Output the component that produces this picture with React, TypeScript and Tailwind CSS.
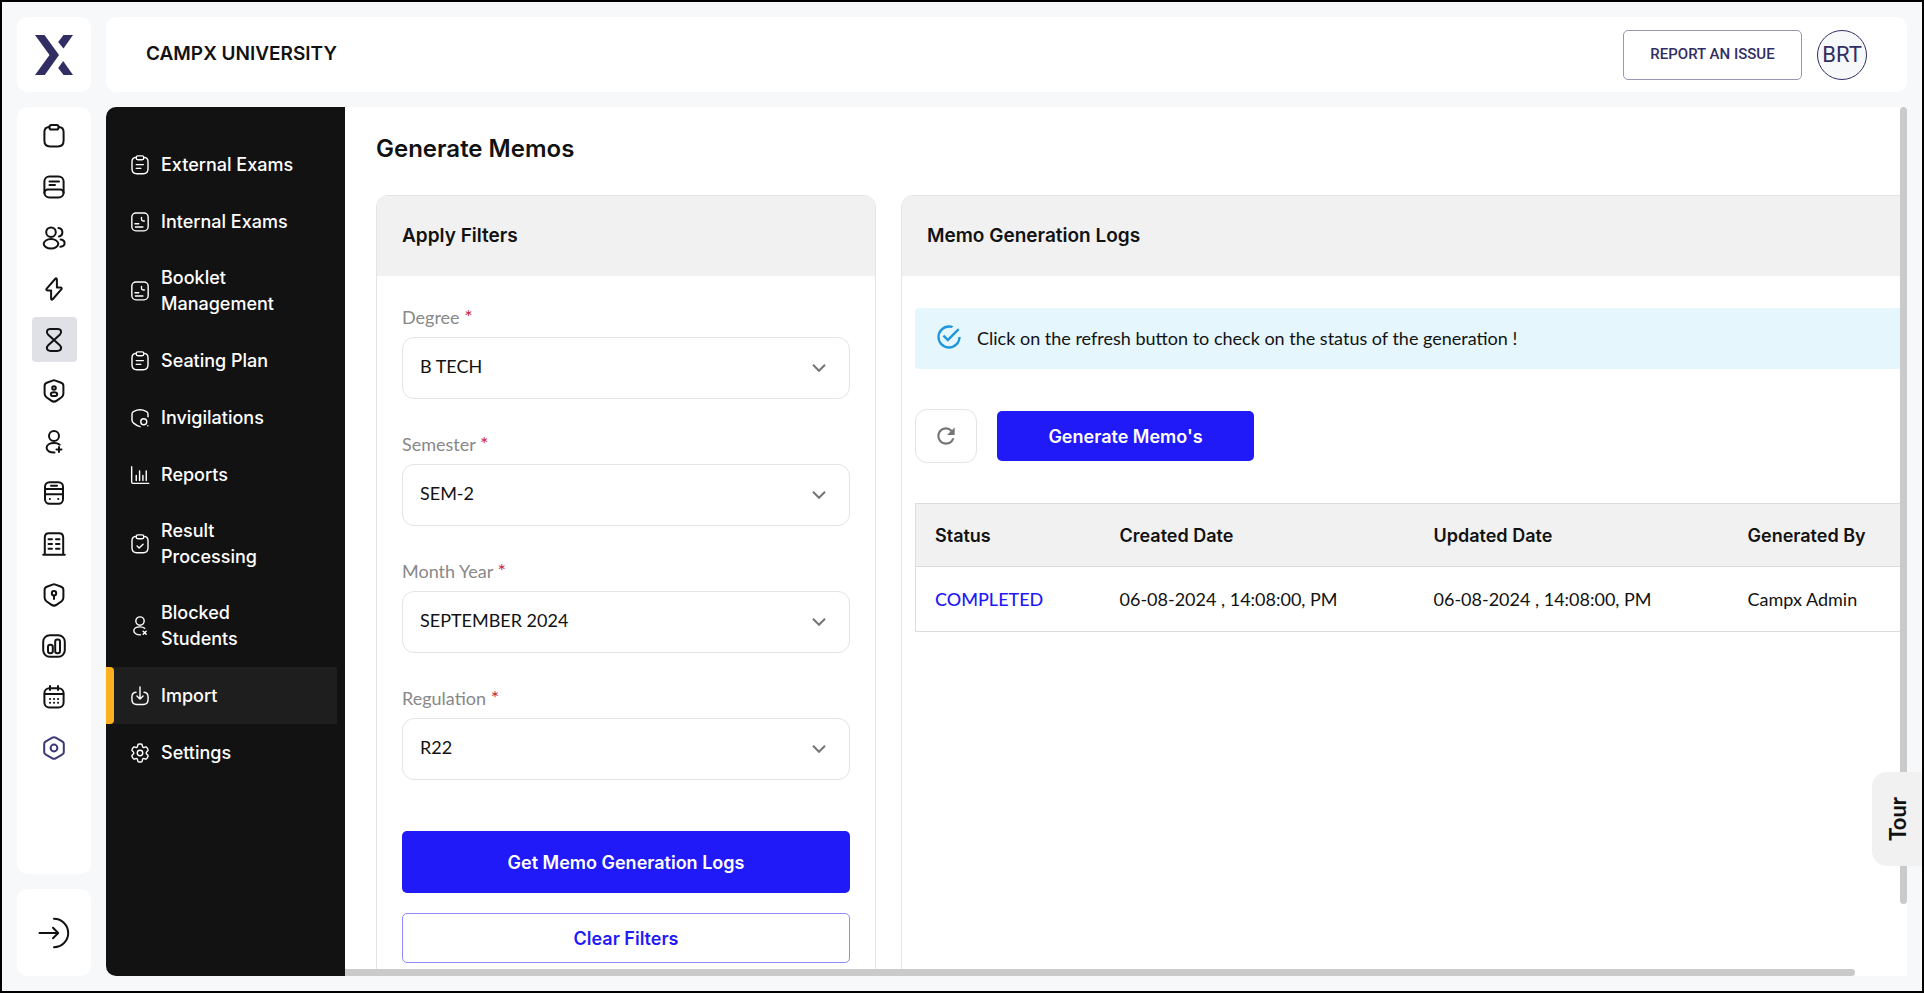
import { useState } from 'react';
import type { ReactNode } from 'react';
import { MdRefresh } from 'react-icons/md';

type IconProps = { children: ReactNode; className?: string };

const Icon = ({ children, className = 'size-6 stroke-2' }: IconProps) => (
  <svg
    viewBox="0 0 24 24"
    fill="none"
    stroke="currentColor"
    strokeWidth="1.7"
    strokeLinecap="round"
    strokeLinejoin="round"
    aria-hidden="true"
    className={`shrink-0 ${className}`}
  >
    {children}
  </svg>
);

const shieldPath =
  'M10.49 1.6L4.8 3.8c-1.2.45-2.2 1.9-2.2 3.2v7.6c0 1.3.8 2.9 1.8 3.6l4.8 3.4c1.5 1.1 4.1 1.1 5.6 0l4.8-3.4c1-.7 1.8-2.3 1.8-3.6V7c0-1.3-1-2.75-2.2-3.2l-5.69-2.2c-.85-.31-2.21-.31-3.02 0z';

const clipboardBody = (
  <>
    <path d="M7.5 2.9C4 3 2.4 4.6 2.4 8v8.5c0 4 1.6 5.9 5.6 5.9h8c4 0 5.6-1.9 5.6-5.9V8c0-3.4-1.6-5-5.1-5.1" />
    <rect x="7.4" y="1" width="9.2" height="4.6" rx="2.1" />
  </>
);

const noteBody = (
  <>
    <rect x="2.2" y="1.2" width="19.6" height="21.4" rx="5" />
    <path d="M6 14h4.5M6.5 18h9M13.8 6.5v2.3c0 1.2.8 2 2 2h1.4" />
  </>
);

const railItems = [
  { label: 'Exams', icon: clipboardBody },
  {
    label: 'Courses',
    icon: (
      <>
        <rect x="2.4" y="1.4" width="19.2" height="21.2" rx="5" />
        <path d="M2.4 18c0-2 1.6-3.5 3.6-3.5h12c2 0 3.6 1.5 3.6 3.5M7.5 6.5H17M7.5 10H13" />
      </>
    ),
  },
  {
    label: 'People',
    icon: (
      <>
        <circle cx="9" cy="6.2" r="4.8" />
        <ellipse cx="9" cy="17.8" rx="7.3" ry="4.7" />
        <path d="M16.5 2a4.3 4.3 0 0 1 .4 8.5M18.6 13.6c2.5.4 4 1.7 4 3.6s-1.5 3.2-4.2 3.6" />
      </>
    ),
  },
  {
    label: 'Quick actions',
    icon: (
      <path d="M5.6 13.5h3.5v7.9c0 1.4.8 1.7 1.8.6l8.4-9.6c.8-1 .4-1.9-.9-1.9h-3.5V2.6c0-1.4-.8-1.7-1.8-.6L4.7 11.6c-.8 1-.4 1.9.9 1.9z" />
    ),
  },
  {
    label: 'Examinations',
    icon: (
      <path d="M15.6 1.1H8.4c-4 0-4.3 3.6-2.2 5.6l11.6 10.6c2.1 2 1.8 5.6-2.2 5.6H8.4c-4 0-4.3-3.6-2.2-5.6L17.8 6.7c2.1-2 1.8-5.6-2.2-5.6z" />
    ),
  },
  {
    label: 'Admissions',
    icon: (
      <>
        <path d={shieldPath} />
        <circle cx="12" cy="9" r="1.8" />
        <ellipse cx="12" cy="15.2" rx="3.2" ry="1.9" />
      </>
    ),
  },
  {
    label: 'Enrollment',
    icon: (
      <>
        <circle cx="12" cy="6" r="5" />
        <path d="M12.5 22.6c-4.7.1-7.9-1.9-7.9-4.8S7.8 13 12 13c2.7 0 4.5.7 5.7 1.7M17 16.9v5M14.5 19.4h5" />
      </>
    ),
  },
  {
    label: 'Transport',
    icon: (
      <>
        <rect x="3" y="1.2" width="18" height="21.6" rx="4.5" />
        <path d="M3 8h18M3 13.2h18M9 4.7h6M7.8 18h.1M16.2 18h.1" />
      </>
    ),
  },
  {
    label: 'Hostel',
    icon: (
      <path d="M2.8 22.4V5.5c0-2.7 1.4-4.2 4.2-4.2h10c2.8 0 4.2 1.5 4.2 4.2v16.9M1.2 22.7h21.6M6.5 7.3H10M6.5 12H10M6.5 16.7H10M14 7.3h3.5M14 12h3.5M14 16.7h3.5" />
    ),
  },
  {
    label: 'Security',
    icon: (
      <>
        <path d={shieldPath} />
        <circle cx="12" cy="10.2" r="2.2" />
        <path d="M12 12.4V16" />
      </>
    ),
  },
  {
    label: 'Statistics',
    icon: (
      <>
        <rect x="1.2" y="1.2" width="21.6" height="21.6" rx="6.5" />
        <rect x="6" y="10.8" width="4.8" height="8.4" rx="2.2" />
        <rect x="13.2" y="5.5" width="4.8" height="13.7" rx="2.2" />
      </>
    ),
  },
  {
    label: 'Calendar',
    icon: (
      <>
        <rect x="2.4" y="3.2" width="19.2" height="19.4" rx="5" />
        <path d="M8 1v4M16 1v4M2.8 9h18.4M8 14h.1M12 14h.1M16 14h.1M8 17.7h.1M12 17.7h.1M16 17.7h.1" />
      </>
    ),
  },
  {
    label: 'Preferences',
    accent: true,
    icon: (
      <>
        <path d="M2.2 8.9v6.2c0 2.2 0 2.3 2.1 3.7l6.1 3.5c.9.5 2.3.5 3.2 0l6.1-3.5c2.1-1.4 2.1-1.5 2.1-3.7V8.9c0-2.2 0-2.3-2.1-3.7l-6.1-3.5c-.9-.5-2.3-.5-3.2 0L4.3 5.2C2.2 6.6 2.2 6.7 2.2 8.9z" />
        <circle cx="12" cy="12" r="3.4" />
      </>
    ),
  },
];

const paperIcon = (
  <>
    {clipboardBody}
    <path d="M7.5 11.5H16M7.5 16h5.5" />
  </>
);

const menuItems = [
  { label: 'External Exams', icon: paperIcon },
  { label: 'Internal Exams', icon: noteBody },
  { label: 'Booklet Management', icon: noteBody },
  { label: 'Seating Plan', icon: paperIcon },
  {
    label: 'Invigilations',
    icon: (
      <>
        <path d="M21.6 10.5V7.2c0-1.3-1-2.7-2.2-3.2-4.7-2.4-10.1-2.4-14.8 0C3.4 4.5 2.4 5.9 2.4 7.2v7.3c0 1.2.8 2.8 1.8 3.5 2.3 1.9 4.6 4 7.8 4.4" />
        <circle cx="16.5" cy="16.5" r="3.6" />
        <path d="M21.3 21.3h.1" />
      </>
    ),
  },
  {
    label: 'Reports',
    icon: <path d="M2 2v18.5c0 1 .5 1.500 1.500 1.500H22.500M7.500 18.500v-6M11.500 18.500V7M15.500 18.500v-6M19.500 18.500V7" />,
  },
  {
    label: 'Result Processing',
    icon: (
      <>
        {clipboardBody}
        <path d="M8.5 14.5l2.5 2.3 4.7-4.6" />
      </>
    ),
  },
  {
    label: 'Blocked Students',
    icon: (
      <>
        <circle cx="12" cy="6" r="5" />
        <path d="M12.5 22.6c-4.7.1-7.9-1.9-7.9-4.8S7.8 13 12 13c2.7 0 4.5.7 5.7 1.7M15.8 18.2l3.6 3.6M19.4 18.2l-3.6 3.6" />
      </>
    ),
  },
  {
    label: 'Import',
    icon: (
      <path d="M12 1v14.5M8.3 12l3.7 3.700 3.700-3.700M7.200 7.500c-3.400.3-4.900 2-4.900 5.600v3.200c0 4.200 1.700 5.900 5.900 5.900h7.600c4.200 0 5.900-1.700 5.900-5.900v-3.200c0-3.600-1.500-5.300-4.900-5.600" />
    ),
  },
  {
    label: 'Settings',
    icon: (
      <g transform="rotate(90 12 12)">
        <path d="M1.2 12.9v-1.8c0-1 .9-1.9 1.9-1.9 2.1 0 2.9-1.4 1.9-3.1-.5-.9-.2-2 .7-2.5l1.9-1.1c.8-.5 1.8-.2 2.3.6l.1.2c1 1.7 3 1.7 4 0l.1-.2c.5-.8 1.5-1.1 2.3-.6l1.9 1.1c.9.5 1.2 1.6.7 2.5-1 1.7-.2 3.1 1.9 3.1 1 0 1.9.9 1.9 1.9v1.8c0 1-.9 1.9-1.9 1.9-2.1 0-2.9 1.4-1.9 3.1.5.9.2 2-.7 2.5l-1.9 1.1c-.8.5-1.8.2-2.3-.6l-.1-.2c-1-1.7-3-1.7-4 0l-.1.2c-.5.8-1.5 1.1-2.3.6l-1.9-1.1c-.9-.5-1.2-1.6-.7-2.5 1-1.7.2-3.1-1.9-3.1-1 0-1.9-.9-1.9-1.9z" />
        <circle cx="12" cy="12" r="3.3" />
      </g>
    ),
  },
];

const filters = [
  { id: 'degree', label: 'Degree', options: ['B TECH', 'M TECH', 'MBA'] },
  { id: 'semester', label: 'Semester', options: ['SEM-2', 'SEM-1', 'SEM-3'] },
  { id: 'monthYear', label: 'Month Year', options: ['SEPTEMBER 2024', 'AUGUST 2024'] },
  { id: 'regulation', label: 'Regulation', options: ['R22', 'R20', 'R18'] },
];

const logs = [
  {
    status: 'COMPLETED',
    createdAt: '06-08-2024 , 14:08:00, PM',
    updatedAt: '06-08-2024 , 14:08:00, PM',
    generatedBy: 'Campx Admin',
  },
];

const Logo = () => (
  <svg viewBox="0 0 38 40" className="w-[38px] h-10" fill="#312e63" role="img" aria-label="CampX">
    <path d="M0 0h9.5L24 20 9.8 40H0l14.5-20z" />
    <path d="M28.5 0H38l-9.5 13.5L23.2 7z" />
    <path d="M28.2 26L38 40h-9.5l-5.3-7z" />
  </svg>
);

const IconRail = () => (
  <nav
    aria-label="Modules"
    className="flex flex-1 min-h-0 flex-col items-center gap-1.5 overflow-hidden rounded-[10px] bg-white pt-1.5"
  >
    {railItems.map(({ label, icon, accent }) => (
      <a
        key={label}
        href="#"
        aria-label={label}
        className={`flex size-[45px] shrink-0 items-center justify-center rounded ${
          label === 'Examinations' ? 'bg-[#e0e0e7]' : ''
        } ${accent ? 'text-[#3b3876]' : 'text-[#121212]'}`}
      >
        <Icon>{icon}</Icon>
      </a>
    ))}
  </nav>
);

const SideMenu = () => (
  <nav
    aria-label="Examinations"
    className="flex w-[239px] shrink-0 flex-col overflow-hidden rounded-l-[10px] bg-[#121212] pt-[29px]"
  >
    {menuItems.map(({ label, icon }) => {
      const active = label === 'Import';
      return (
        <a
          key={label}
          href="#"
          className={`mr-2 flex min-h-[57px] items-center text-white ${active ? 'bg-[#1e1e1e]' : ''}`}
        >
          <span className={`w-2 shrink-0 self-stretch rounded-r ${active ? 'bg-[#ffb020]' : ''}`} />
          <Icon className="ml-4 size-5">{icon}</Icon>
          <span className="ml-[11px] w-36 py-[15px] text-[18px] leading-[26px] font-medium">{label}</span>
        </a>
      );
    })}
  </nav>
);

const FilterPanel = () => {
  const [values, setValues] = useState<Record<string, string>>({
    degree: 'B TECH',
    semester: 'SEM-2',
    monthYear: 'SEPTEMBER 2024',
    regulation: 'R22',
  });

  return (
    <section className="w-[500px] shrink-0 overflow-hidden rounded-t-[12px] border border-[#e4e4e4]">
      <h2 className="bg-[#f1f1f1] px-[25px] py-[26px] text-[19px] leading-7 font-semibold">Apply Filters</h2>
      <form className="px-[25px] pt-[27px] pb-[25px]" onSubmit={(e) => e.preventDefault()}>
        {filters.map(({ id, label, options }) => (
          <div key={id} className="mb-[31px]">
            <label htmlFor={id} className="block pb-1.5 font-[Lato] text-[18px] leading-7 text-[#888888]">
              {label} <span className="text-[20px] leading-none text-[#c62a3e]">*</span>
            </label>
            <div className="relative">
              <select
                id={id}
                value={values[id]}
                onChange={(e) => setValues({ ...values, [id]: e.target.value })}
                className="h-[62px] w-full appearance-none rounded-[12px] border border-[#e4e4e4] bg-white px-[17px] pb-1 font-[Lato] text-[18px] text-[#121212]"
              >
                {options.map((option) => (
                  <option key={option}>{option}</option>
                ))}
              </select>
              <svg
                viewBox="0 0 14 8"
                fill="none"
                stroke="#757575"
                strokeWidth="2"
                aria-hidden="true"
                className="pointer-events-none absolute top-[27px] right-6 h-2 w-3.5"
              >
                <path d="M1 .8l6 6 6-6" />
              </svg>
            </div>
          </div>
        ))}
        <button type="submit" className="mt-5 h-[62px] w-full rounded-[5px] bg-[#1f1af7] text-[18px] font-semibold text-white">
          Get Memo Generation Logs
        </button>
        <button
          type="button"
          className="mt-5 h-[50px] w-full rounded-[5px] border border-[#8f8cfb] text-[18px] font-semibold text-[#1f1af7]"
        >
          Clear Filters
        </button>
      </form>
    </section>
  );
};

const LogsPanel = () => (
  <section className="w-[1040px] shrink-0 overflow-hidden rounded-t-[12px] border border-[#e4e4e4]">
    <h2 className="bg-[#f1f1f1] px-[25px] py-[26px] text-[19px] leading-7 font-semibold">Memo Generation Logs</h2>
    <div className="px-[13px] pt-8">
      <div role="status" className="flex h-[61px] items-center gap-3.5 rounded bg-[#e5f6fd] px-5">
        <svg viewBox="0 0 24 24" fill="#1f97dc" aria-hidden="true" className="mb-1 size-7 shrink-0">
          <path d="M20 12a8 8 0 1 1-8-8c.76 0 1.5.11 2.2.31l1.57-1.57A9.8 9.8 0 0 0 12 2a10 10 0 1 0 10 10M7.91 10.08L6.5 11.5 11 16 21 6l-1.41-1.42L11 13.17z" />
        </svg>
        <p className="font-[Lato] text-[18px] text-[#121212]">
          Click on the refresh button to check on the status of the generation !
        </p>
      </div>
      <div className="mt-10 flex items-center gap-5">
        <button
          type="button"
          aria-label="Refresh"
          className="flex h-[54px] w-[62px] items-center justify-center rounded-[12px] border border-[#e4e4e4] text-[#757575]"
        >
          <MdRefresh className="size-[26px]" />
        </button>
        <button type="button" className="h-[50px] w-[257px] rounded-[5px] bg-[#1f1af7] text-[18px] font-semibold text-white">
          Generate Memo's
        </button>
      </div>
      <table className="mt-10 w-full table-fixed border border-[#dcdcdc] text-left">
        <colgroup>
          <col className="w-[185px]" />
          <col className="w-[314px]" />
          <col className="w-[314px]" />
          <col />
        </colgroup>
        <thead>
          <tr className="h-[63px] border-b border-[#dcdcdc] bg-[#f1f1f1] text-[18px]">
            <th className="px-[19px] font-semibold">Status</th>
            <th className="px-[19px] font-semibold">Created Date</th>
            <th className="px-[19px] font-semibold">Updated Date</th>
            <th className="px-[19px] font-semibold">Generated By</th>
          </tr>
        </thead>
        <tbody className="font-[Lato] text-[18px]">
          {logs.map((log) => (
            <tr key={log.createdAt} className="h-[65px]">
              <td className="px-[19px] font-medium text-[#1f1af7]">{log.status}</td>
              <td className="px-[19px]">{log.createdAt}</td>
              <td className="px-[19px]">{log.updatedAt}</td>
              <td className="px-[19px]">{log.generatedBy}</td>
            </tr>
          ))}
        </tbody>
      </table>
    </div>
  </section>
);

const App = () => {
  return (
    <div className="relative flex h-screen gap-[15px] overflow-hidden border-2 border-black bg-[#f7f8fa] p-[15px] font-[Inter,sans-serif] text-[#121212]">
      <div className="flex w-[74px] shrink-0 flex-col gap-[15px]">
        <a href="#" className="flex h-[75px] items-center justify-center rounded-[10px] bg-white">
          <Logo />
        </a>
        <IconRail />
        <button type="button" aria-label="Log out" className="flex h-[87px] items-center justify-center rounded-[10px] bg-white">
          <svg
            viewBox="0 0 32 32"
            fill="none"
            stroke="#121212"
            strokeWidth="2"
            strokeLinecap="round"
            strokeLinejoin="round"
            className="size-8"
          >
            <path d="M16 1.800a14.200 14.200 0 0 1 0 28.400M1.500 16H20M15 10.800l5.200 5.200-5.200 5.200" />
          </svg>
        </button>
      </div>

      <div className="flex min-w-0 flex-1 flex-col gap-[15px]">
        <header className="flex h-[75px] shrink-0 items-center rounded-[10px] bg-white px-10">
          <h1 className="flex-1 text-[19px] font-semibold">CAMPX UNIVERSITY</h1>
          <button
            type="button"
            className="h-[50px] w-[179px] rounded-[5px] border border-[#9896b5] font-[Roboto] text-[15px] font-medium text-[#312e63]"
          >
            REPORT AN ISSUE
          </button>
          <button
            type="button"
            aria-label="Account BRT"
            className="ml-[15px] flex size-[50px] items-center justify-center rounded-full border border-[#312e63] bg-[#f7f8fa] font-[Roboto] text-[22px] text-[#312e63]"
          >
            BRT
          </button>
        </header>

        <div className="flex min-h-0 flex-1">
          <SideMenu />
          <main className="relative min-w-0 flex-1 bg-white">
            <div className="h-full overflow-auto [scrollbar-width:none]">
              <div className="w-max min-w-full pt-[26px] pr-3 pl-[31px]">
                <h1 className="text-[24px] leading-8 font-semibold">Generate Memos</h1>
                <div className="mt-[30px] flex gap-[25px]">
                  <FilterPanel />
                  <LogsPanel />
                </div>
              </div>
            </div>
            {/* scroll thumbs */}
            <div className="absolute top-0 right-0 h-11/12 w-[7px] rounded-full bg-[#cacaca]" />
            <div className="absolute bottom-0 left-0 h-[7px] w-29/30 rounded-r-full bg-[#cacaca]" />
          </main>
        </div>
      </div>

      <button
        type="button"
        className="absolute right-0 bottom-[125px] flex h-[94px] w-[50px] items-center justify-center rounded-l-[15px] bg-[#f1f1f1] font-[Lato] text-[22px] font-bold"
      >
        <span className="rotate-180 [writing-mode:vertical-rl]">Tour</span>
      </button>
    </div>
  );
};

export default App;
